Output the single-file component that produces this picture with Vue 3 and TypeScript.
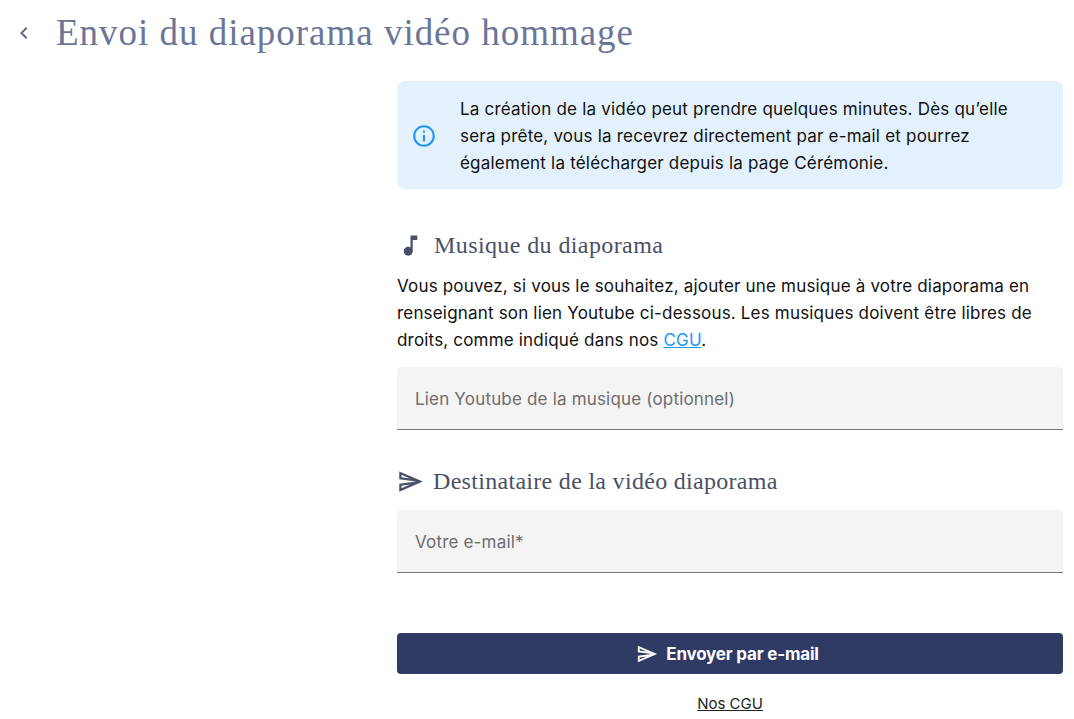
<script setup lang="ts">
const title = 'Envoi du diaporama vidéo hommage'
const sendPath = 'M4.01 6.03l7.51 3.22-7.52-1 .01-2.22m7.5 8.72L4 17.97v-2.22l7.51-1M2.01 3L2 10l15 2-15 2 .01 7L23 12 2.01 3z'
</script>

<template>
  <div class="page">
    <header class="top">
      <button class="back" aria-label="Retour">
        <svg width="24" height="24" viewBox="0 0 24 24"><path d="M15.41 7.41L14 6l-6 6 6 6 1.41-1.41L10.83 12z" fill="#5f6a8c"/></svg>
      </button>
      <h1>{{ title }}</h1>
    </header>
    <main class="col">
      <div class="info">
        <svg class="info-ic" width="26" height="26" viewBox="0 0 24 24">
          <path d="M11 7h2v2h-2zm0 4h2v6h-2zm1-9C6.48 2 2 6.48 2 12s4.48 10 10 10 10-4.48 10-10S17.52 2 12 2zm0 18c-4.41 0-8-3.59-8-8s3.59-8 8-8 8 3.59 8 8-3.59 8-8 8z" fill="#2196f3"/>
        </svg>
        <p>La création de la vidéo peut prendre quelques minutes. Dès qu’elle sera prête, vous la recevrez directement par e-mail et pourrez également la télécharger depuis la page Cérémonie.</p>
      </div>

      <h2 class="h-music">
        <svg width="27" height="27" viewBox="0 0 24 24"><path d="M12 3v10.55c-.59-.34-1.27-.55-2-.55-2.21 0-4 1.79-4 4s1.79 4 4 4 4-1.79 4-4V7h4V3h-6z" fill="#4a5068"/></svg>
        Musique du diaporama
      </h2>
      <p class="desc">Vous pouvez, si vous le souhaitez, ajouter une musique à votre diaporama en renseignant son lien Youtube ci-dessous. Les musiques doivent être libres de droits, comme indiqué dans nos <a href="#">CGU</a>.</p>
      <div class="field first">Lien Youtube de la musique (optionnel)</div>

      <h2 class="h-send">
        <svg width="27" height="27" viewBox="0 0 24 24"><path :d="sendPath" fill="#4a5068"/></svg>
        Destinataire de la vidéo diaporama
      </h2>
      <div class="field second">Votre e-mail*</div>

      <button class="send">
        <svg width="22" height="22" viewBox="0 0 24 24"><path :d="sendPath" fill="#fff"/></svg>
        Envoyer par e-mail
      </button>
      <a class="cgu" href="#">Nos CGU</a>
    </main>
  </div>
</template>

<style>
html, body { margin: 0; background: #fff; }
</style>

<style scoped>
.page { width: 1074px; height: 719px; overflow: hidden; font-family: Inter, "Noto Sans", sans-serif; color: #111; }
.top { display: flex; align-items: center; height: 65px; padding-left: 12px; gap: 20px; }
.back { padding: 0; border: 0; background: none; display: flex; }
h1 { margin: 0; font: 400 37px/1 "Liberation Serif", serif; letter-spacing: .98px; color: #6b7696; }
.col { margin-left: 397px; width: 666px; padding-top: 16px; display: flex; flex-direction: column; }
.info { display: flex; align-items: center; gap: 23px; background: #e3f1fc; border-radius: 8px; padding: 15px 40px 12px 14px; }
.info-ic { flex: none; margin-top: -2px; }
.info p { margin: 0; font-size: 17px; letter-spacing: .2px; line-height: 27px; }
h2 { margin: 0; display: flex; align-items: center; font: 400 24px/28px "Liberation Serif", serif; letter-spacing: .4px; color: #4a5068; }
.h-music { margin-top: 42px; gap: 10px; }
.desc { margin: 14px 0 0; font-size: 17px; letter-spacing: .18px; line-height: 27px; }
.desc a { color: #2196f3; }
.field { height: 63px; box-sizing: border-box; background: #f4f4f4; border-bottom: 1px solid #777; border-radius: 4px 4px 0 0; padding: 2px 18px 0; display: flex; align-items: center; font-size: 17px; letter-spacing: .18px; color: #6d6d6d; }
.first { margin-top: 13px; }
.second { margin-top: 15px; }
.h-send { margin-top: 37px; gap: 9px; letter-spacing: .3px; }
.send { margin-top: 60px; height: 41px; border: 0; border-radius: 4px; background: #2f3a65; color: #fff; font: 700 17px Inter, sans-serif; letter-spacing: -.2px; display: flex; align-items: center; justify-content: center; gap: 8px; padding: 0 5px 0 0; }
.cgu { margin-top: 20px; align-self: center; font-size: 15px; color: #222; }
</style>
